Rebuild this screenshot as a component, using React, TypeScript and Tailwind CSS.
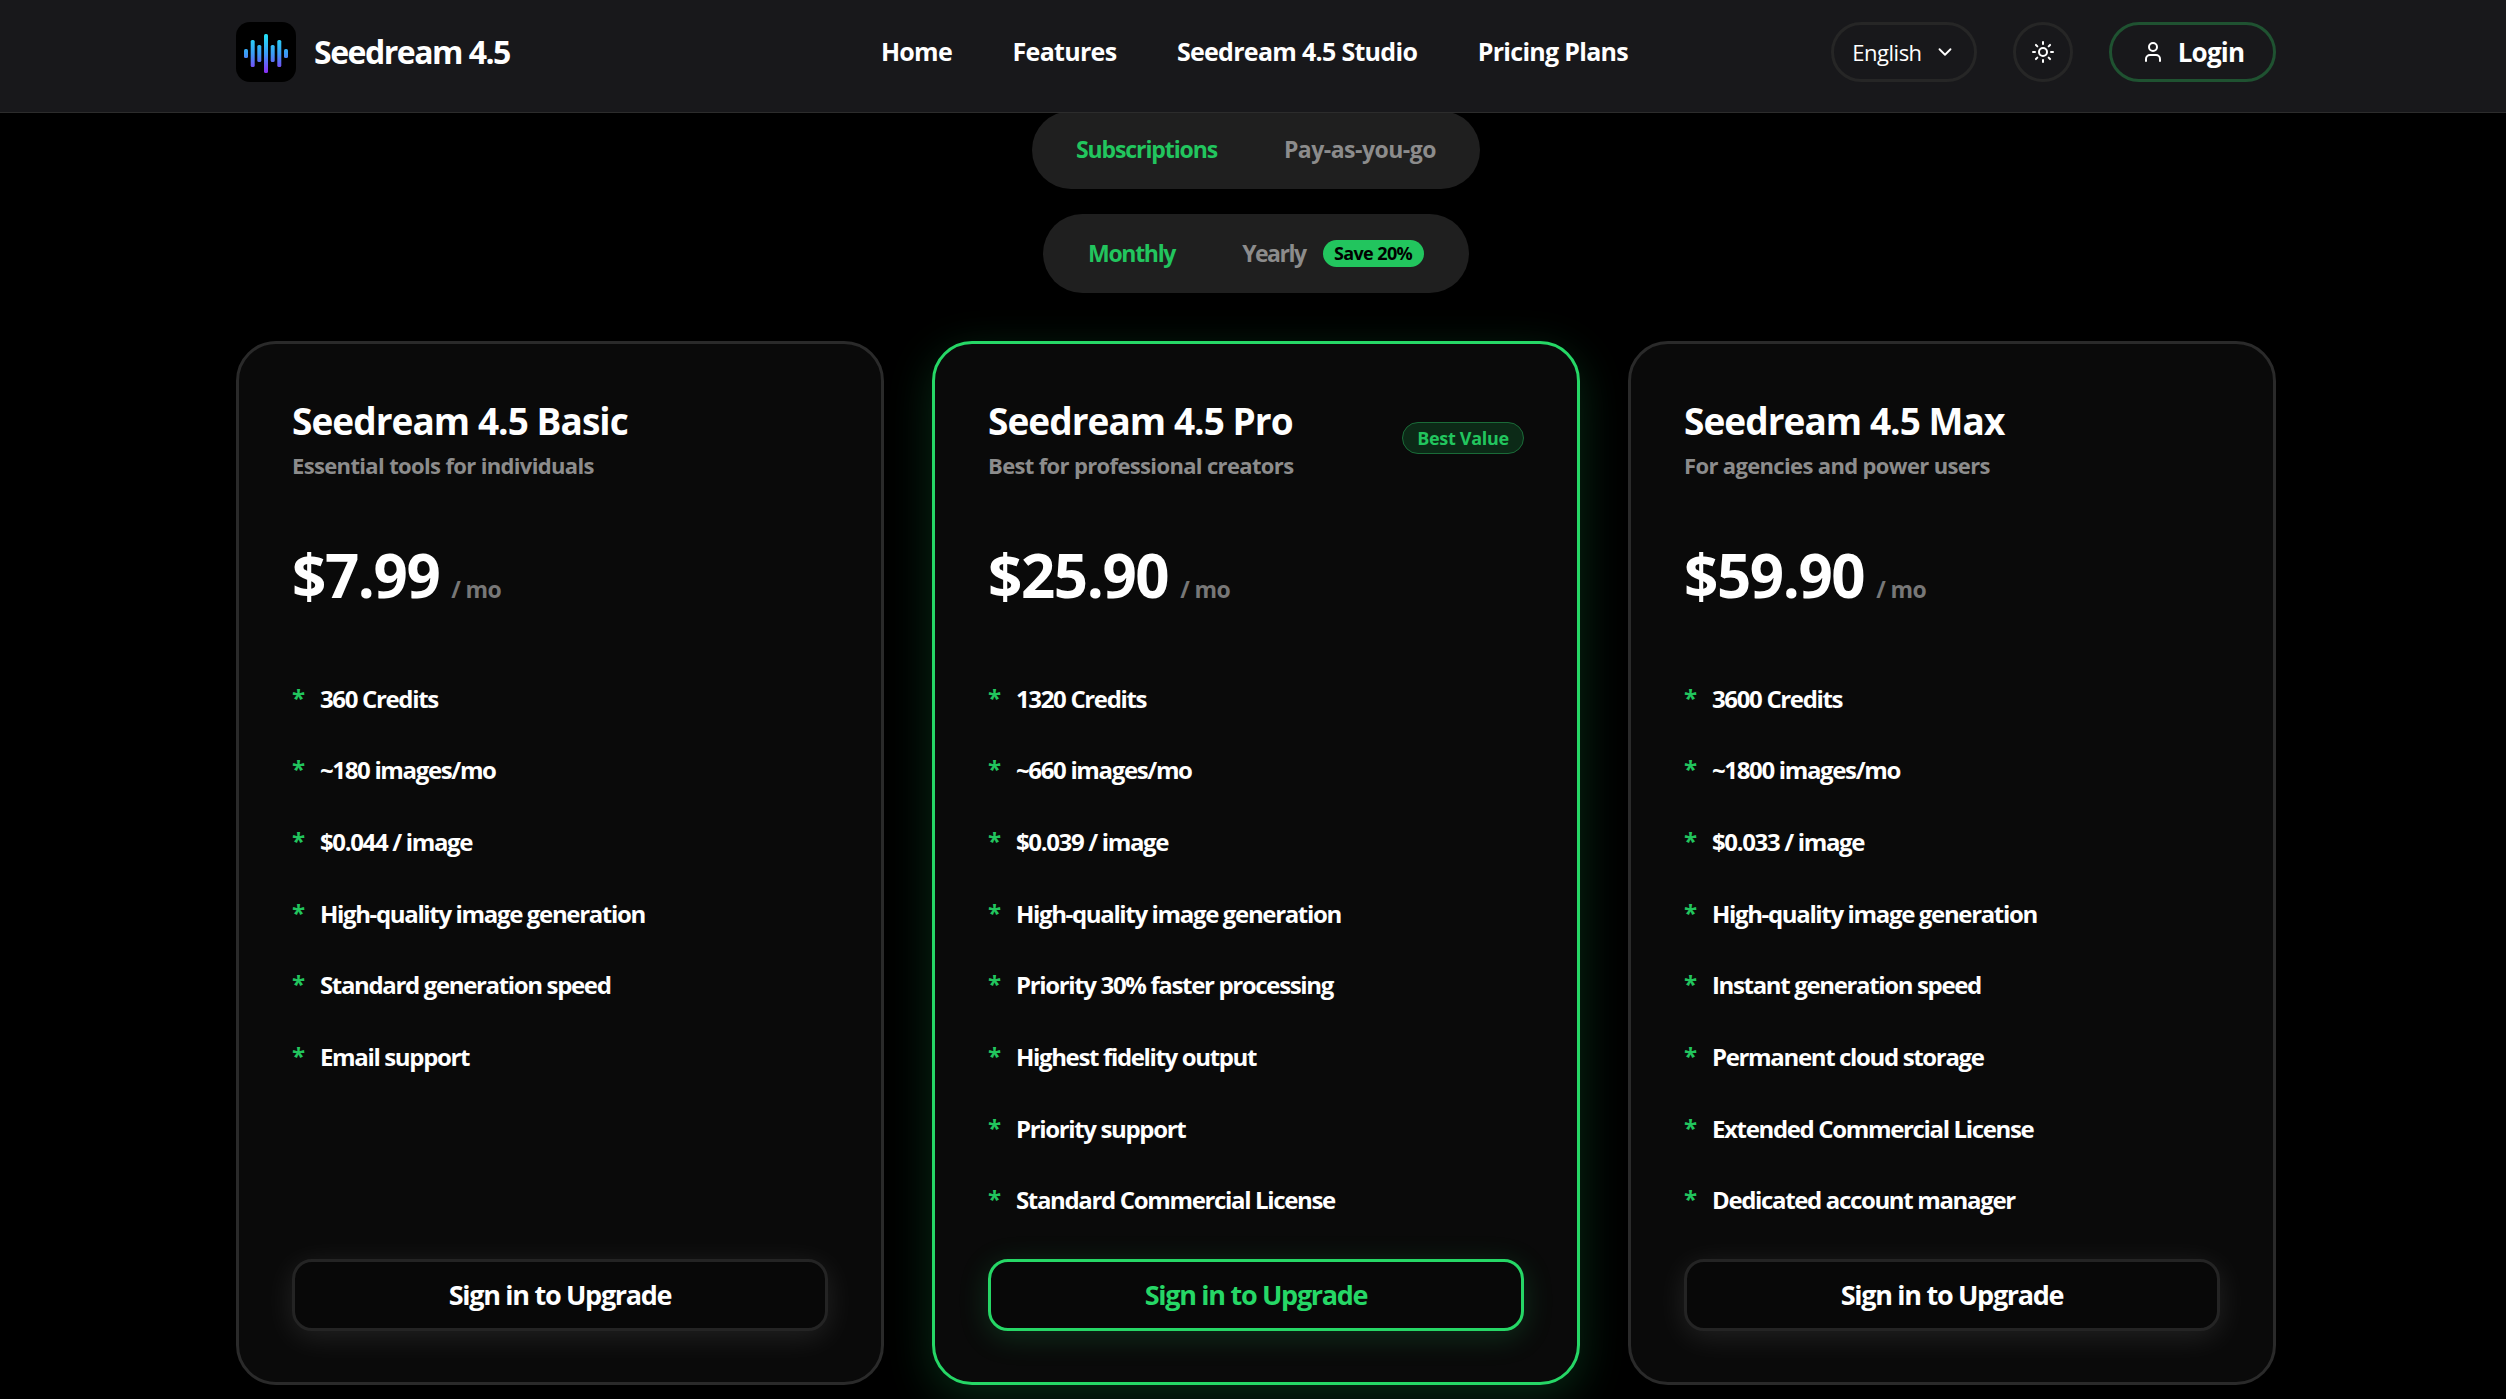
import { ChevronDown, Sun, User } from 'lucide-react'

interface Plan {
  name: string
  tagline: string
  price: string
  features: string[]
  featured?: boolean
}

const plans: Plan[] = [
  {
    name: 'Seedream 4.5 Basic',
    tagline: 'Essential tools for individuals',
    price: '$7.99',
    features: ['360 Credits', '~180 images/mo', '$0.044 / image', 'High-quality image generation', 'Standard generation speed', 'Email support'],
  },
  {
    name: 'Seedream 4.5 Pro',
    tagline: 'Best for professional creators',
    price: '$25.90',
    featured: true,
    features: ['1320 Credits', '~660 images/mo', '$0.039 / image', 'High-quality image generation', 'Priority 30% faster processing', 'Highest fidelity output', 'Priority support', 'Standard Commercial License'],
  },
  {
    name: 'Seedream 4.5 Max',
    tagline: 'For agencies and power users',
    price: '$59.90',
    features: ['3600 Credits', '~1800 images/mo', '$0.033 / image', 'High-quality image generation', 'Instant generation speed', 'Permanent cloud storage', 'Extended Commercial License', 'Dedicated account manager'],
  },
]

const navLinks = ['Home', 'Features', 'Seedream 4.5 Studio', 'Pricing Plans']

const bars = [
  { x: 10, y1: 27, y2: 36 },
  { x: 16.7, y1: 18, y2: 45 },
  { x: 23.3, y1: 23, y2: 40 },
  { x: 30, y1: 12, y2: 51 },
  { x: 36.7, y1: 23, y2: 40 },
  { x: 43.3, y1: 18, y2: 45 },
  { x: 50, y1: 27, y2: 36 },
]

function Logo() {
  return (
    <svg width="60" height="60" viewBox="0 0 60 60" className="shrink-0">
      <defs>
        <linearGradient id="wave" gradientUnits="userSpaceOnUse" x1="0" y1="12" x2="0" y2="51">
          <stop offset="0" stopColor="#22e3f5" />
          <stop offset="0.5" stopColor="#3b9df5" />
          <stop offset="1" stopColor="#8b2cf5" />
        </linearGradient>
      </defs>
      <rect width="60" height="60" rx="14" fill="#000" />
      {bars.map((b) => (
        <rect key={b.x} x={b.x - 2} y={b.y1} width="4" height={b.y2 - b.y1} rx="1.5" fill="url(#wave)" />
      ))}
    </svg>
  )
}

function BestValue({ show }: { show?: boolean }) {
  if (!show) return null
  return (
    <span className="mt-[26px] flex h-[32px] w-[122px] items-center justify-center rounded-full border border-[#1a6b38] bg-[#0c2a17] text-[18px] font-bold tracking-[-0.3px] text-[#22c55e]">
      Best Value
    </span>
  )
}

function PlanCard({ plan }: { plan: Plan }) {
  return (
    <div
      className={`flex flex-col h-[1044px] rounded-[40px] border-[3px] bg-[#0a0a0a] px-[53px] pt-[52px] pb-[51px] ${
        plan.featured
          ? 'border-[#26d766] shadow-[0_12px_45px_rgba(34,197,94,0.22)]'
          : 'border-[#2a2a2a]'
      }`}
    >
      <div className="flex items-start justify-between">
        <div>
          <h2 className="text-[37px] leading-[50px] font-bold tracking-[-0.95px] text-white">{plan.name}</h2>
          <p className="mt-[3px] text-[22px] leading-[32px] font-bold tracking-[-0.65px] text-[#8c8c8c]">{plan.tagline}</p>
        </div>
        <BestValue show={plan.featured} />
      </div>
      <div className="mt-[54px] flex items-baseline">
        <span className="text-[60px] leading-[80px] font-bold tracking-[-1.4px] text-white">{plan.price}</span>
        <span className="ml-[12px] text-[23px] font-bold tracking-[-0.6px] text-[#777777]">/ mo</span>
      </div>
      <ul className="mt-[65.5px] flex flex-1 flex-col gap-[35.7px]">
        {plan.features.map((f) => (
          <li key={f} className="flex h-[36px] items-center text-[24px] font-bold tracking-[-1.35px] text-white">
            <span className="w-[28px] shrink-0 -translate-y-[1.5px] text-[#22c55e]">*</span>
            {f}
          </li>
        ))}
      </ul>
      <button
        className={`h-[72px] w-full rounded-[20px] border-[3px] bg-[#080808] pt-[1px] text-[27px] font-bold tracking-[-1.3px] ${
          plan.featured
            ? 'border-[#26d766] text-[#26d766] shadow-[0_6px_30px_rgba(34,197,94,0.2)]'
            : 'border-[#242424] text-white shadow-[0_6px_30px_rgba(255,255,255,0.1)]'
        }`}
      >
        Sign in to Upgrade
      </button>
    </div>
  )
}

export default function App() {
  return (
    <div className="min-h-[1399px] overflow-hidden bg-black font-['Open_Sans',sans-serif]">
      <header className="relative z-10 h-[113px] border-b border-[#2c2c2c] bg-[#18181b] pl-[236px]">
        <div className="flex h-[104px] w-[2040px] items-center justify-between">
          <div className="flex w-[442px] items-center gap-[18px]">
            <Logo />
            <span className="text-[32px] font-bold tracking-[-1.5px] text-white">Seedream 4.5</span>
          </div>
          <nav className="flex items-center gap-[60.5px]">
            {navLinks.map((l) => (
              <a key={l} className="text-[25px] font-bold tracking-[-0.7px] text-white">{l}</a>
            ))}
          </nav>
          <div className="flex items-center">
            <button className="flex h-[60px] w-[146px] items-center justify-center gap-[12px] rounded-full border-[3px] border-[#262626] text-[22px] tracking-[-0.5px] text-white">
              English <ChevronDown size={22} />
            </button>
            <button className="ml-[36px] flex h-[60px] w-[60px] items-center justify-center rounded-full border-[3px] border-[#262626] text-white">
              <Sun size={24} />
            </button>
            <button className="ml-[36px] flex h-[60px] w-[167px] items-center justify-center gap-[13px] rounded-full border-[3px] border-[#1f5231] text-[26px] font-bold tracking-[-0.8px] text-white">
              <User size={24} /> Login
            </button>
          </div>
        </div>
      </header>

      <main className="-mt-[2px] ml-[236px] flex w-[2040px] flex-col items-center">
        <div className="flex h-[78px] w-[448px] items-center justify-between rounded-full bg-[#1f1f1f] px-[44px] pb-[2px]">
          <span className="text-[23px] font-bold tracking-[-1.1px] text-[#22c55e]">Subscriptions</span>
          <span className="text-[23px] font-bold tracking-[-0.5px] text-[#8c8c8c]">Pay-as-you-go</span>
        </div>
        <div className="mt-[25px] flex h-[79px] w-[426px] items-center rounded-full bg-[#1f1f1f] pl-[45px]">
          <span className="text-[23px] font-bold tracking-[-1.3px] text-[#22c55e]">Monthly</span>
          <span className="ml-[67px] text-[23px] font-bold tracking-[-1.5px] text-[#8c8c8c]">Yearly</span>
          <span className="ml-[17px] flex h-[27px] w-[101px] items-center justify-center rounded-full bg-[#22c55e] text-[18px] font-bold tracking-[-0.6px] text-black">
            Save 20%
          </span>
        </div>
        <section className="mt-[48px] grid w-[2040px] grid-cols-3 gap-[48px]">
          {plans.map((p) => (
            <PlanCard key={p.name} plan={p} />
          ))}
        </section>
      </main>
    </div>
  )
}
